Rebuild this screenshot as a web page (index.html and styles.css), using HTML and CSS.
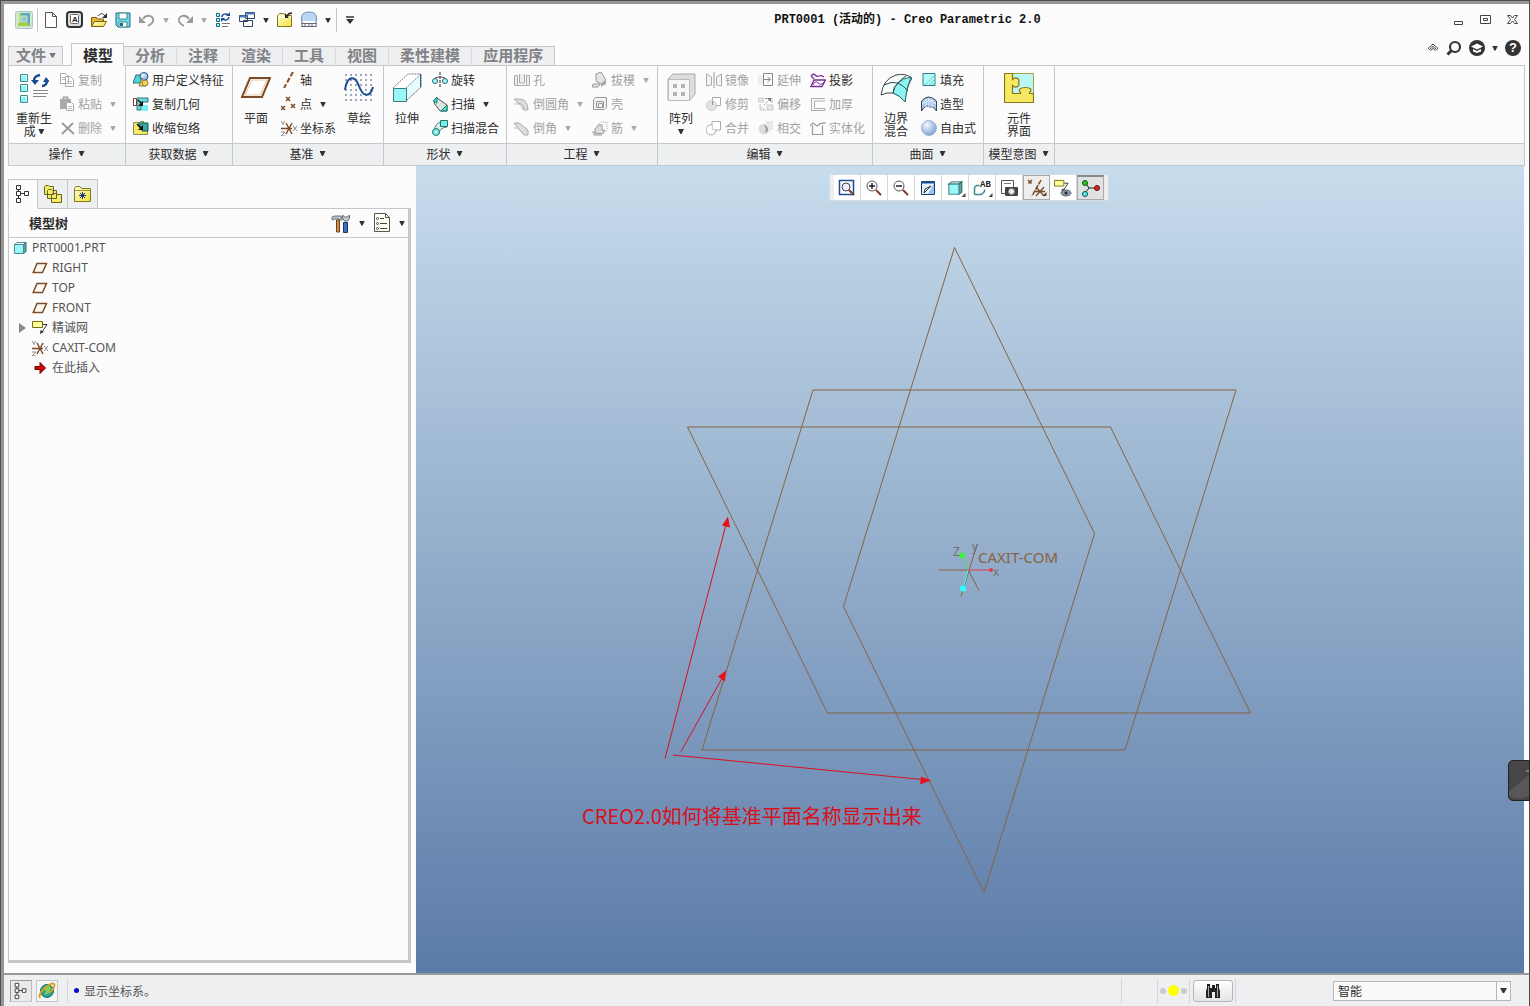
FILE: index.html
```html
<!DOCTYPE html>
<html lang="zh-CN">
<head>
<meta charset="utf-8">
<title>PRT0001 (活动的) - Creo Parametric 2.0</title>
<link rel="stylesheet" href="styles.css">
</head>
<body>
<svg class="defs" aria-hidden="true">
  <defs>
    <linearGradient id="yellow" x2="1" y2="1"><stop offset="0" stop-color="#fffde0"/><stop offset="1" stop-color="#f2e032"/></linearGradient>
    <linearGradient id="cyan" x2="1" y2="1"><stop offset="0" stop-color="#e8ffff"/><stop offset="1" stop-color="#5fe3e3"/></linearGradient>
    <radialGradient id="ball" cx=".35" cy=".3" r=".7"><stop offset="0" stop-color="#f4f9ff"/><stop offset="1" stop-color="#7fa6d3"/></radialGradient>
    <linearGradient id="leaf"><stop offset="0" stop-color="#eaf6c0"/><stop offset="1" stop-color="#4cb85c"/></linearGradient>
    <symbol id="i-cube" viewBox="0 0 16 16"><path d="M2.500 4.500 5 2.500h9l-2.500 2z" fill="#f0ffff" stroke="#5c8c90"/><path d="m11.500 4.500 2.500-2v9l-2.500 2z" fill="#5aa3a6" stroke="#2c6c70"/><path d="M2.500 4.500h9v9h-9z" fill="#9af7f7" stroke="#4c8c90"/></symbol>
    <symbol id="i-plane" viewBox="0 0 16 12"><path d="M5 1.500h9.500L10.500 10.500H1.200z" fill="#fffaf2" stroke="#7d4c26" stroke-width="1.500"/></symbol>
    <symbol id="i-csys" viewBox="0 0 16 16"><path d="M0 8.500h11M5 3l6 11M11 3 5 14" stroke="#7d4c26" stroke-width="1.500" fill="none"/><path d="m0 1 2 2.500L4 1M2 3v2M0 12h4l-4 4h4M12 6l4 5m0-5-4 5" stroke="#888" fill="none"/></symbol>
    <symbol id="i-tree" viewBox="0 0 16 20"><path d="M3.500 5v9M5 9.500h4" stroke="#333" fill="none"/><path d="M1.500 1.500h4v4h-4zM1.500 7.500h4v4h-4zM1.500 14.500h4v4h-4zM9.500 7.500h4v4h-4z" fill="#fff" stroke="#333"/></symbol>
    <symbol id="i-note" viewBox="0 0 16 16"><path d="M.5 1.500h10v6H.5z" fill="#ffffa0" stroke="#77700a"/><path d="M11 4.500h4L10 12" stroke="#333" fill="none"/><path d="m8 14 .5-4 3.500 2z" fill="#333"/></symbol>
    <symbol id="i-folder" viewBox="0 0 18 18"><path d="M1.500 15.500v-11l2-2h4l2 2h6v11z" fill="url(#yellow)" stroke="#7b7a20"/><path d="M2 6.500h13" stroke="#fff"/></symbol>
  </defs>
</svg>
<div class="window">
<header class="titlebar">
  <div class="quick">
    <button class="qb" aria-label="Creo"><svg width="18" height="18"><rect x=".5" y=".5" width="17" height="17" rx="2" fill="#d2e6d0" stroke="#a9c3cf"/><path d="M3 2h12v13H3z" fill="#5aa7bf"/><path d="M3 2h4v13H3z" fill="url(#leaf)"/><path d="M3 12h11v3H3z" fill="#a4cf3f"/><path d="M6 5h6v6H6z" fill="#8cc8e0" stroke="#d8eaa0"/></svg></button>
    <i class="sep"></i>
    <button class="qb" aria-label="新建"><svg width="16" height="18"><path d="M2.500 1.500h7l4 4v11h-11zM9.500 1.500v4h4" fill="#fff" stroke="#555"/></svg></button>
    <button class="qb" aria-label="重命名"><svg width="18" height="18"><rect x="1" y="1" width="15" height="15" rx="3" fill="#ddd" stroke="#333" stroke-width="2"/><rect x="4.500" y="3.500" width="8" height="9" rx="1" fill="#fff" stroke="#666"/><text class="key" x="6" y="11">A</text></svg></button>
    <button class="qb" aria-label="打开"><svg width="18" height="18"><path d="M1.500 15.500v-9h5l1 1.500h6v3" fill="#e9b93a" stroke="#806010"/><path d="m1.500 15.500 3-5h12l-3 5z" fill="url(#yellow)" stroke="#806010"/><path d="M8 5c2-3 5-3 7 0" fill="none" stroke="#333"/><path d="M17 2v5h-5z" fill="#333"/></svg></button>
    <button class="qb" aria-label="保存"><svg width="18" height="18"><path d="M2 2h14v14H4l-2-2z" fill="#6fd9e3" stroke="#1d6f82"/><path d="M5 2h8v6H5zM5 11h8v5H5z" fill="#fff" stroke="#3b8b99"/><path d="M6 12h3v3H6z" fill="#1d6f82"/></svg></button>
    <button class="qb" aria-label="撤消"><svg width="18" height="18"><path d="M5 8c3-5 11-4 10 2 0 2-2 3-5 5" fill="none" stroke="#999" stroke-width="1.800"/><path d="M1 5v7h7z" fill="#999"/></svg></button>
    <button class="drop off" aria-label="撤消列表"><i class="caret"></i></button>
    <button class="qb" aria-label="重做"><svg width="18" height="18"><path d="M13 8C10 3 2 4 3 10c0 2 2 3 5 5" fill="none" stroke="#999" stroke-width="1.800"/><path d="M17 5v7h-7z" fill="#999"/></svg></button>
    <button class="drop off" aria-label="重做列表"><i class="caret"></i></button>
    <button class="qb" aria-label="重新生成"><svg width="18" height="18"><path d="M2.500 2.500h3v3h-3zM2.500 7.500h3v3h-3zM2.500 12.500h3v3h-3z" fill="#9ff" stroke="#267"/><path d="M8 12.500h8M8 15.500h6" stroke="#777"/><path d="M8 6c0-3 4-4 6-2m1 2c0 3-4 4-6 2" fill="none" stroke="#1b4c94" stroke-width="1.500"/><path d="M12 5h4V1zM11 7H7v4z" fill="#1b4c94"/></svg></button>
    <button class="qb" aria-label="窗口"><svg width="18" height="18"><path d="M7.500 1.500h9v6h-9zM1.500 4.500h8v6h-8zM5.500 9.500h9v6h-9z" fill="#fff" stroke="#346"/><path d="M7.500 2.500h9M1.500 5.500h8" stroke="#4a78b8" stroke-width="2"/></svg></button>
    <button class="drop" aria-label="窗口列表"><i class="caret"></i></button>
    <button class="qb" aria-label="关闭"><svg width="18" height="18"><use href="#i-folder"/><path d="M16 2c-3 0-4 1-5 3" fill="none" stroke="#222" stroke-width="1.500"/><path d="M9 2v5h4z" fill="#222"/></svg></button>
    <button class="qb" aria-label="测量"><svg width="18" height="18"><path d="M1.500 10V7q0-6 7.500-6t7.500 6v3" fill="#bcd5f3" stroke="#6d8fb8"/><path d="M1.500 12.500h15M1.500 15.500h15M2 10v6M16 10v6M5 13v3M9 13v3M12 13v3" stroke="#667"/></svg></button>
    <button class="drop" aria-label="测量列表"><i class="caret"></i></button>
    <i class="sep"></i>
    <button class="qb" aria-label="自定义"><svg width="8" height="8"><path d="M0 1h8" stroke="#333" stroke-width="1.500"/><path d="M0 3h8L4 8z" fill="#333"/></svg></button>
  </div>
  <h1>PRT0001 (活动的) - Creo Parametric 2.0</h1>
  <div class="winctl">
    <button aria-label="最小化"><svg width="12" height="12"><path d="M1.500 7.500h8v3h-8z" fill="#fff" stroke="#444"/></svg></button>
    <button aria-label="还原"><svg width="12" height="12"><path d="M.5 1.500h10v8H.5zM3.500 4.500h4v2h-4z" fill="#fff" stroke="#444"/></svg></button>
    <button aria-label="关闭"><svg width="12" height="12"><path d="M.5 1.500h3L5.500 4l2-2.500h3L7.500 5.500l3 4h-3l-2-2.500-2 2.500h-3l3-4z" fill="#fff" stroke="#444"/></svg></button>
  </div>
</header>

<div class="tabbar">
  <nav class="tabs">
    <button class="tab file">文件<i class="caret"></i></button>
    <button class="tab active">模型</button>
    <button class="tab">分析</button><button class="tab">注释</button><button class="tab">渲染</button><button class="tab">工具</button><button class="tab">视图</button><button class="tab">柔性建模</button><button class="tab">应用程序</button>
  </nav>
  <div class="help">
    <button aria-label="折叠功能区"><svg width="12" height="10"><path d="M1 5.500 6 1l5 4.500-1.500 1L6 3.500l-3.500 3zM3.500 7.500 6 5.500l2.500 2" fill="#fff" stroke="#444"/></svg></button>
    <button aria-label="搜索"><svg width="16" height="16"><circle cx="9" cy="7" r="5" fill="none" stroke="#333" stroke-width="2.200"/><path d="m5.500 10.500-4 4" stroke="#333" stroke-width="3"/></svg></button>
    <button aria-label="学习"><svg width="16" height="16"><circle cx="8" cy="8" r="8" fill="#333"/><path d="m2 6.500 6-3 6 3-6 3zM4 9v2.500l4 1.500 4-1.500V9L8 11z" fill="#fff"/></svg></button>
    <button aria-label="学习列表"><i class="caret"></i></button>
    <button class="qmark" aria-label="帮助">?</button>
  </div>
</div>

<section class="ribbon">
  <div class="group g1"><div class="body indent">
    <button class="big"><svg width="30" height="30"><path d="M1.500 1.500h7v7h-7zM1.500 11.500h7v7h-7zM1.500 22.500h7v7h-7z" fill="#e4ffff" stroke="#3c8c90"/><path d="M2 3h5v5H2zM2 13h5v5H2zM2 24h5v5H2z" fill="#8ff5f5"/><path d="M14 17.500h15M14 20.500h15M14 23.500h13" stroke="#888"/><path d="M15 8c0-4 2-5 6-6M28 7c0 4-2 6-5 6" fill="none" stroke="#1b4c94" stroke-width="2.500"/><path d="M12 7h8l-4 5zM24 9h7l-4-5z" fill="#1b4c94"/></svg><span>重新生<br>成 <i class="caret"></i></span></button>
    <div class="col">
      <button class="cmd" disabled><svg width="16" height="16"><path d="M1.500 1.500h5l3 3v7h-8zM6.500 4.500h5l3 3v7h-8z" fill="#fff" stroke="#aaa"/><path d="M8 9.500h5M8 11.500h5M3 5.500h3M3 7.500h3" stroke="#bbb"/></svg>复制</button>
      <button class="cmd" disabled><svg width="16" height="16"><path d="M1 3h11v10H1z" fill="#aaa"/><path d="M4 1h5v3H4z" fill="#ccc" stroke="#999"/><path d="M7.500 6.500h5l2 2v6h-7z" fill="#fff" stroke="#aaa"/><path d="M9 10.500h4M9 12.500h4" stroke="#bbb"/></svg>粘贴<i class="caret"></i></button>
      <button class="cmd" disabled><svg width="16" height="16"><path d="m3 3 12 11M14 3 3 14" stroke="#999" stroke-width="1.800"/></svg>删除<i class="caret"></i></button>
    </div></div><button class="glabel">操作<i class="caret"></i></button></div>

  <div class="group g2"><div class="body pad">
    <div class="col">
      <button class="cmd"><svg width="16" height="16"><path d="M3 3h7l-3 8H0z" fill="#4fd5dd" stroke="#276"/><circle cx="11" cy="4.500" r="4" fill="url(#ball)" stroke="#258"/><path d="m9 6 4 8H6z" fill="#f5df50" stroke="#875"/><circle cx="12" cy="11" r="3" fill="#f0d850" stroke="#875"/></svg>用户定义特征</button>
      <button class="cmd"><svg width="16" height="16"><path d="M4 2h11v4H8v8H4z" fill="#6fdcdc" stroke="#277"/><path d="M.5 2.500h3v7h-3z" fill="#fff" stroke="#833"/><path d="M9 9h6v6H9z" fill="#7aeff5"/><path d="m5 4 4 4" stroke="#111" stroke-width="1.500"/><path d="M5 10h5V5z" fill="#111"/></svg>复制几何</button>
      <button class="cmd"><svg width="16" height="16"><path d="M.5 14.500v-12h6l1-1h3v9h4v4z" fill="#f7ea5e" stroke="#886"/><path d="M6 3h9v8H9V7H6z" fill="#38a9a0" stroke="#155"/><path d="m4 4 5 5" stroke="#111" stroke-width="1.500"/><path d="M5 10h5V5z" fill="#111"/></svg>收缩包络</button>
    </div></div><button class="glabel">获取数据<i class="caret"></i></button></div>

  <div class="group g3"><div class="body">
    <button class="big"><svg width="30" height="30"><path d="M9 5h20l-8 19H1z" fill="#fff" stroke="#7d4c26" stroke-width="2"/><path d="M11 7h15l-7 15H4z" fill="#fff" stroke="#e6c8a4"/></svg><span>平面</span></button>
    <div class="col">
      <button class="cmd"><svg width="16" height="16"><path d="M12 0 3 16" stroke="#8d4f22" stroke-width="2" stroke-dasharray="5 2"/></svg>轴</button>
      <button class="cmd"><svg width="16" height="16"><path d="m5 1 4 4m0-4L5 5M0 10l4 4m0-4-4 4m10-6 4 4m0-4-4 4" stroke="#7d4c26" stroke-width="1.500"/></svg>点<i class="caret"></i></button>
      <button class="cmd"><svg width="16" height="16"><use href="#i-csys"/></svg>坐标系</button>
    </div>
    <button class="big"><svg width="30" height="30"><path d="M1 2h29M1 7h29M1 12h29M1 17h29M1 22h29M1 27h29" stroke="#9aa8bc" stroke-width="2" stroke-dasharray="2 3"/><path d="M1 17C3 2 11 2 15 13s11 12 14 1" fill="none" stroke="#1b4c94" stroke-width="2"/></svg><span>草绘</span></button>
    </div><button class="glabel">基准<i class="caret"></i></button></div>

  <div class="group g4"><div class="body">
    <button class="big"><svg width="30" height="30"><path d="M1 15 16 1h13v13L14 28" fill="#fff" stroke="#777" stroke-dasharray="2 1"/><path d="M14 15 29 1v13L14 28z" fill="#e6fbfb" stroke="#888" stroke-dasharray="2 1"/><path d="M28.500 1v13" stroke="#1d6f82"/><path d="M1.500 15.500h13v13h-13z" fill="#9af7f7" stroke="#3c7c80"/></svg><span>拉伸</span></button>
    <div class="col">
      <button class="cmd"><svg width="16" height="16"><path d="M8 0v16" stroke="#222" stroke-dasharray="3 1"/><circle cx="3" cy="9" r="2.500" fill="#9ff" stroke="#366"/><circle cx="13" cy="9" r="2.500" fill="#9ff" stroke="#366"/><path d="M3 6q5-3 10 0" fill="none" stroke="#555"/></svg>旋转</button>
      <button class="cmd"><svg width="16" height="16"><path d="m5 2 10 7v6H8L2 7z" fill="#d9e6e2" stroke="#555"/><path d="m1 5 4-4v6zM9 15l6-6v6z" fill="#3fe0e0" stroke="#276"/></svg>扫描<i class="caret"></i></button>
      <button class="cmd"><svg width="16" height="16"><path d="M2 11q1-8 7-9l6 5q-8 1-8 7z" fill="#d5eeee" stroke="#677"/><path d="M8.500.5h7v6h-7z" fill="#7ee" stroke="#276"/><circle cx="4" cy="12" r="3.500" fill="#7ee" stroke="#276"/><circle cx="4" cy="12" r="1" fill="#fff"/></svg>扫描混合</button>
    </div></div><button class="glabel">形状<i class="caret"></i></button></div>

  <div class="group g5"><div class="body pad spaced">
    <div class="col">
      <button class="cmd" disabled><svg width="16" height="16"><path d="M.5 3.500h3v10h-3zM12.500 3.500h3v10h-3zM5.500 2v9h5V2M3.500 13.500h9" fill="#eee" stroke="#aaa"/></svg>孔</button>
      <button class="cmd" disabled><svg width="16" height="16"><path d="M0 3h6q8 1 8 11h-4q0-6-6-7z" fill="#ddd" stroke="#aaa"/><path d="M0 8h5q3 1 4 6" fill="none" stroke="#bbb"/></svg>倒圆角<i class="caret"></i></button>
      <button class="cmd" disabled><svg width="16" height="16"><path d="M0 3h5l9 7v5h-4L4 8z" fill="#ddd" stroke="#aaa"/><path d="M0 8h4l5 6" fill="none" stroke="#bbb"/></svg>倒角<i class="caret"></i></button>
    </div>
    <div class="col">
      <button class="cmd" disabled><svg width="16" height="16"><path d="M4 2 9 0l5 8-5 4-5-3zM1 12h7l-2 3H0z" fill="#e4e4e4" stroke="#999"/><path d="m9 12 5-4v4l-5 3z" fill="#aaa"/></svg>拔模<i class="caret"></i></button>
      <button class="cmd" disabled><svg width="16" height="16"><path d="M1.500 3.500 3.500 1.500h11v10l-2 2h-11zM4.500 5.500h7v6h-7zM6.500 7.500h4v4h-4z" fill="#f3f3f3" stroke="#999"/></svg>壳</button>
      <button class="cmd" disabled><svg width="16" height="16"><path d="M4.500 6 9 2h6v8l-4 4" fill="none" stroke="#aaa" stroke-dasharray="1 1"/><path d="M3 13V9l4-4h3v5h3l-3 4zM0 12h2v3h8" fill="#ddd" stroke="#999"/></svg>筋<i class="caret"></i></button>
    </div></div><button class="glabel">工程<i class="caret"></i></button></div>

  <div class="group g6"><div class="body">
    <button class="big"><svg width="30" height="30"><path d="m2 6 5-5h22v20l-5 6H2z" fill="#ddd" stroke="#aaa"/><path d="M2.500 6.500h21v21h-21z" fill="#f7f7f7" stroke="#bbb"/><path d="M7 11h4v4H7zM15 11h4v4h-4zM7 19h4v4H7zM15 19h4v4h-4z" fill="#b4b4b4"/></svg><span>阵列<br><i class="caret"></i></span></button>
    <div class="spaced">
    <div class="col">
      <button class="cmd" disabled><svg width="16" height="16"><path d="M.5 2 5.500 5v8l-5 1zM15.500 2l-5 3v8l5 1z" fill="#f3f3f3" stroke="#aaa"/><path d="M8 0v16" stroke="#999"/></svg>镜像</button>
      <button class="cmd" disabled><svg width="16" height="16"><path d="M6.500 1.500h8v8h-8z" fill="#fff" stroke="#aaa"/><circle cx="5.500" cy="9.500" r="5" fill="#e2e2e2" stroke="#ccc"/><path d="M6.500 9V5" stroke="#999"/></svg>修剪</button>
      <button class="cmd" disabled><svg width="16" height="16"><path d="M6 1.500h8.500V10H10a5 5 0 1 1-4-5z" fill="#fff" stroke="#aaa"/><path d="M6.500 5v4.500H10" fill="none" stroke="#ccc"/></svg>合并</button>
    </div>
    <div class="col">
      <button class="cmd" disabled><svg width="16" height="16"><path d="M0 3h6v10H0z" fill="#eee"/><path d="M5.500 1.500h9v12h-9zM6 7.500h6M9.500 5l3 2.500-3 2.500" fill="none" stroke="#888"/></svg>延伸</button>
      <button class="cmd" disabled><svg width="16" height="16"><path d="M.5 2h5v4h-5zM9 9h6v5H9zM2 8v6h6" fill="#e6e6e6" stroke="#ccc"/><path d="m6 9 5-5M7 2.500h7v5" fill="none" stroke="#999" stroke-dasharray="2 1"/><path d="M13 2v4L9 2z" fill="#777"/></svg>偏移</button>
      <button class="cmd" disabled><svg width="16" height="16"><circle cx="6" cy="9" r="5.500" fill="#ddd"/><path d="M8 1h7v9H8z" fill="#e9e9e9"/><path d="M6 5q4 0 4 6l-3 2q2-4-1-8z" fill="#999"/></svg>相交</button>
    </div>
    <div class="col">
      <button class="cmd"><svg width="16" height="16"><path d="M1 4q2-3 4-1t4 1 5 1M1 4l3 3" fill="none" stroke="#7a2a9a" stroke-width="1.300"/><path d="m4 8-3 6.500h11L15.500 8z" fill="#fff" stroke="#7a2a9a" stroke-width="1.300"/><path d="M3 13q2-5 5-2t6-1" fill="none" stroke="#7a2a9a"/></svg>投影</button>
      <button class="cmd" disabled><svg width="16" height="16"><path d="M15 2.500H1.500v12H15v-2M15 5H4.500v7.500H15" fill="none" stroke="#aaa"/></svg>加厚</button>
      <button class="cmd" disabled><svg width="16" height="16"><path d="M2.500 5.500v9h10v-9M0 6l3-3 4 3q4-4 9-3" fill="none" stroke="#999" stroke-width="1.200"/></svg>实体化</button>
    </div></div></div><button class="glabel">编辑<i class="caret"></i></button></div>

  <div class="group g7"><div class="body">
    <button class="big"><svg width="32" height="30"><path d="M1 22Q3 6 16 2q10-2 16 3-6 10-7 24-5-7-12-9-6-1-12 2z" fill="#f4fdfd" stroke="#444"/><path d="M18 10q5-5 13-6-5 11-6 25-5-7-12-9 1-6 5-10z" fill="#8af5f2" stroke="#277"/><path d="M4 12q7-4 14-2 6 3 10 8M13 20q0-6 5-10 3-4 8-7" fill="none" stroke="#444"/></svg><span>边界<br>混合</span></button>
    <div class="col">
      <button class="cmd"><svg width="16" height="16"><path d="M2 1.500h12v12H2z" fill="#b4fbf8" stroke="#267f86"/><path d="m8 13 6-6M11 13l3-3M4 13 14 3" stroke="#5bd4d0"/></svg>填充</button>
      <button class="cmd"><svg width="16" height="16"><path d="M.5 15V5q7-8 15 0v10q-3-5-6-4-3-1-4-1-3 1-5 5z" fill="#a8c6ea" stroke="#345"/><path d="M5 3v8M8 2v9M11 3v9M1 8q7-7 14 0" fill="none" stroke="#e8f0fa"/></svg>造型</button>
      <button class="cmd"><svg width="16" height="16"><circle cx="8" cy="8" r="7.500" fill="url(#ball)" stroke="#9fb4cc"/></svg>自由式</button>
    </div></div><button class="glabel">曲面<i class="caret"></i></button></div>

  <div class="group g8"><div class="body middle">
    <button class="big"><svg width="30" height="30"><path d="M.5.500h29v29H.5z" fill="#b9f6f6" stroke="#aaa040"/><path d="M.5.500h8v6c3-3 8-1 6 3 2 4-3 6-6 3v8h8v-1c-3-3 0-5 5-5s7 2 4 5v1h4v9H.5z" fill="#f7ea62" stroke="#85741a" stroke-width="1.200"/></svg><span>元件<br>界面</span></button>
    </div><button class="glabel">模型意图<i class="caret"></i></button></div>
  <div class="group rest"><div class="body"></div><div class="glabel"></div></div>
</section>

<main class="work">
  <aside class="side">
    <div class="sidetabs">
      <button class="stab on" aria-label="模型树"><svg width="16" height="20"><use href="#i-tree"/></svg></button>
      <button class="stab" aria-label="文件夹浏览器"><svg width="20" height="20"><path d="M1.500 10.500v-8l1-1h3l1 1h4v8zM4.500 14.500v-8l1-1h3l1 1h4v8zM8.500 18.500v-8l1-1h3l1 1h5v8z" fill="#f3ea6e" stroke="#66651a"/></svg></button>
      <button class="stab" aria-label="收藏夹"><svg width="20" height="18"><path d="M1.500 16.500v-13l1.500-2h4l1.500 2h9v13z" fill="url(#yellow)" stroke="#7b7a20"/><path d="M2 5.500h15" stroke="#99983a"/><path d="M6 10.500h7M9.500 7v7M7 8l5 5M12 8l-5 5" stroke="#123a7a"/></svg></button>
    </div>
    <div class="panel">
      <div class="phead">
        <h2>模型树</h2>
        <button aria-label="设置"><svg width="20" height="20"><path d="M1 7V4l3-1h6l1 4H8V6H4z" fill="#b8c4c8" stroke="#678"/><path d="M5.500 7h3v12h-3z" fill="#e08a2c" stroke="#643"/><path d="M12.500 9.500h4v10h-4z" fill="#2f73d0" stroke="#235"/><path d="M11.500 2v3l2 3h3l2-3V2l-2 2h-3z" fill="#c8ced2" stroke="#667"/></svg></button><i class="caret"></i>
        <button aria-label="显示"><svg width="18" height="20"><path d="M1.500.500h11l4 4v14h-15zM12.500.500v4h4" fill="#fffff0" stroke="#555"/><path d="M7 5.500h4M7 10.500h7M7 15.500h7" stroke="#444"/><circle cx="4.500" cy="5.500" r="1" fill="#fff" stroke="#444"/><circle cx="4.500" cy="10.500" r="1" fill="#fff" stroke="#444"/><circle cx="4.500" cy="15.500" r="1" fill="#fff" stroke="#444"/></svg></button><i class="caret"></i>
      </div>
      <ul class="tree">
        <li class="root"><svg width="16" height="16"><use href="#i-cube"/></svg>PRT0001.PRT</li>
        <li><svg width="16" height="12"><use href="#i-plane"/></svg>RIGHT</li>
        <li><svg width="16" height="12"><use href="#i-plane"/></svg>TOP</li>
        <li><svg width="16" height="12"><use href="#i-plane"/></svg>FRONT</li>
        <li class="parent"><i class="twist"></i><svg width="16" height="16"><use href="#i-note"/></svg>精诚网</li>
        <li><svg width="16" height="16"><use href="#i-csys"/></svg>CAXIT-COM</li>
        <li><svg width="16" height="16"><path d="M3 6.500h5v-4l5.500 5.500L8 13.500v-4H3z" fill="#d00" stroke="#600"/></svg>在此插入</li>
      </ul>
    </div>
  </aside>
  <section class="canvas">
    <svg class="scene" viewBox="416 166 1108 806">
      <g fill="none" stroke="#876341">
        <path d="M954.500 247 1094.500 533 984 892 843.500 606z"/>
        <path d="M813 389.500h423L1125 749.500H702z"/>
        <path d="M687.500 426.500h423L1250.500 712.500h-423z"/>
        <path d="M939 569.500h29M977 544l-16 52M968 569l11 21"/>
      </g>
      <path d="M968 569.500h23" stroke="#e0384c"/><path d="m968 569-6-14" stroke="#4be04b"/><path d="m968 570-5 18" stroke="#3ff" />
      <circle cx="991" cy="569.500" r="2" fill="#e0384c"/><circle cx="962" cy="555" r="3" fill="#3df03d"/><circle cx="963" cy="588" r="3" fill="#3ff"/>
      <text class="axis" x="953" y="555">Z</text><text class="axis" x="972" y="550">y</text><text class="axis" x="993" y="575">x</text>
      <text class="csname" x="978" y="562">CAXIT-COM</text>
      <path d="m665 758 61-234M681 751l42-75M673 754.500 922 779" fill="none" stroke="#d8101c"/>
      <path d="m728 516 2 11-8-2zM726 670l-1 11-7-5zM931 780l-11 4 1-8z" fill="#e8101c"/>
      <text class="caption" x="582" y="823">CREO2.0如何将基准平面名称显示出来</text>
    </svg>
    <div class="viewbar">
      <button aria-label="重新调整"><svg width="18" height="18"><path d="M1.500 1.500h14v14h-14z" fill="#fff" stroke="#1b4c94" stroke-width="1.500"/><circle cx="8" cy="8" r="4" fill="#eef" stroke="#444"/><path d="m11 11 5 5" stroke="#7d3c26" stroke-width="2"/></svg></button>
      <button aria-label="放大"><svg width="18" height="18"><circle cx="7" cy="7" r="5" fill="#fff" stroke="#555"/><path d="M4 7h6M7 4v6" stroke="#222" stroke-width="1.500"/><path d="m11 11 5 5" stroke="#7d3c26" stroke-width="2"/></svg></button>
      <button aria-label="缩小"><svg width="18" height="18"><circle cx="7" cy="7" r="5" fill="#fff" stroke="#555"/><path d="M4 7h6" stroke="#222" stroke-width="1.500"/><path d="m11 11 5 5" stroke="#7d3c26" stroke-width="2"/></svg></button>
      <button aria-label="重画"><svg width="18" height="18"><path d="M2.500 2.500h13v13h-13z" fill="#e4f0fc" stroke="#1b3c74"/><path d="M2 3.500h14" stroke="#1b4c94" stroke-width="2"/><path d="M15 4v11H9z" fill="#9cc4f0"/><path d="m12 7-5 5-2 2 1-4z" fill="#fff" stroke="#333"/></svg></button>
      <button aria-label="显示样式" class="more"><svg width="18" height="18"><use href="#i-cube"/></svg></button>
      <button aria-label="已命名视图" class="more"><svg width="18" height="18"><path d="M1.500 15.500v-7l2-2h3M1.500 15.500h7l3-3v-2" fill="none" stroke="#3c8c90" stroke-width="1.500"/><text x="7" y="8" class="ab">AB</text></svg></button>
      <button aria-label="视图管理器"><svg width="18" height="18"><path d="M1.500 1.500h12v13h-12z" fill="#fff" stroke="#555"/><path d="M4 4.500h7" stroke="#777"/><rect x="5" y="8" width="13" height="9" rx="1" fill="#444"/><circle cx="11.500" cy="12.500" r="3" fill="#eee" stroke="#888"/></svg></button>
      <button aria-label="基准显示" class="more sel"><svg width="18" height="18"><path d="m1 1 4 4m0-4L1 5M14 1 5 17" stroke="#7d4c26" stroke-width="1.500" stroke-dasharray="5 1"/><path d="m9 8 8 9M17 8l-8 9M8 12.500h10" stroke="#7d4c26" stroke-width="1.300"/></svg></button>
      <button aria-label="注释显示"><svg width="18" height="18"><use href="#i-note" width="15" height="15"/><ellipse cx="12" cy="14" rx="5" ry="3" fill="#89a" stroke="#567"/><circle cx="12" cy="14" r="1.500" fill="#223"/></svg></button>
      <button aria-label="旋转中心" class="sel pressed"><svg width="20" height="18"><path d="M5 3l4 6h8M9 9l-5 6" fill="none" stroke="#222"/><circle cx="5" cy="4" r="2.500" fill="#2c2" stroke="#151"/><circle cx="17" cy="9" r="2.500" fill="#d22" stroke="#511"/><circle cx="5" cy="15" r="2.500" fill="#5ee" stroke="#155"/></svg></button>
    </div>
  </section>
  <button class="dock" aria-label="展开"><svg width="22" height="41"><path d="M1 32 22 14v22q-12 4-21 0z" fill="#6a6a6c" opacity=".5"/><path d="M18 11h4" stroke="#bbb"/></svg></button>
</main>

<footer class="status">
  <button class="sbtn down" aria-label="模型树显示"><svg width="16" height="18"><use href="#i-tree"/></svg></button>
  <button class="sbtn" aria-label="浏览器显示"><svg width="18" height="18"><circle cx="9" cy="9" r="6.500" fill="#2a9f9a" stroke="#176"/><path d="M6 5q5-3 7 1l-3 6-4 1q3-4 0-8z" fill="#7dd35a"/><path d="M2 16q-2-4 5-10t9-4q2 3-5 9" fill="none" stroke="#d9a520" stroke-width="2"/></svg></button>
  <i class="sep"></i>
  <span class="dot"></span><p>显示坐标系。</p>
  <i class="sep wide"></i><i class="sep"></i>
  <span class="lights"><i></i><i class="lit"></i><i></i></span>
  <i class="sep"></i>
  <button class="find" aria-label="查找"><svg width="18" height="18"><path d="M3 2h3v4h2V3h3v3h1V2h3v4l1 3v7h-5v-6H8v6H2V9l1-3z" fill="#222"/><path d="M4.500 4v11M13.500 4v11" stroke="#aaa"/></svg></button>
  <i class="sep"></i>
  <label class="filter" aria-label="选择过滤器"><select><option>智能</option></select><i class="caret"></i></label>
</footer>
</div>
</body>
</html>
```
FILE: styles.css
```css
* { box-sizing: border-box; }
body { margin: 0; font: 12px/16px "Noto Sans CJK SC", sans-serif; color: #2d2d2d; background: #fcfcfc; }
button { margin: 0; padding: 0; border: 0; background: none; font: inherit; color: inherit; display: flex; align-items: center; justify-content: center; }
svg { display: block; flex: none; }
.defs { width: 0; height: 0; position: absolute; }

.window { display: flex; flex-direction: column; border: solid #999697; border-width: 3px 0 0 3px; outline: 1px solid #504e4f; margin: 1px 1px 0 1px; min-height: calc(100vh - 1px); }

.caret { display: inline-block; flex: none; width: 7px; height: 5px; background: #333; clip-path: polygon(0 0, 100% 0, 60% 100%, 40% 100%); }
.sep { flex: none; width: 1px; height: 24px; margin: 0 1px; background: #c8c8cc; }

/* title bar */
.titlebar { display: flex; align-items: center; height: 32px; padding: 0 10px 0 8px; }
.quick { display: flex; align-items: center; }
.qb { width: 24px; height: 24px; }
.drop { width: 14px; height: 24px; }
.drop .caret, .help .caret { width: 6px; }
.drop.off .caret { background: #aaa; }
.titlebar h1 { flex: 1; margin: 0; text-align: center; font: bold 12px/16px "Liberation Mono", "Noto Sans CJK SC", monospace; color: #111; }
.winctl { display: flex; justify-content: flex-end; gap: 15px; }
.key { font: bold 8px "Liberation Sans", sans-serif; fill: #222; }

/* tabs */
.tabbar { display: flex; justify-content: space-between; height: 30px; padding: 0 8px 0 4px; margin-bottom: -1px; position: relative; }
.tabs { display: flex; align-items: flex-end; }
.tab { height: 20px; padding: 0 11px 2px 11px; font: bold 15px/16px "Noto Sans CJK SC", sans-serif; color: #808285; background: #eeeff1; border: 1px solid #c5c8cb; border-left-width: 0; border-right-color: #d8dadd; }
.tab:last-child { border-right-color: #c5c8cb; }
.tab.file { margin-right: 8px; padding: 0 6px 2px 7px; border-left-width: 1px; border-right-color: #c5c8cb; }
.tab.file .caret { margin-left: 3px; background: #75777a; }
.tab.active { height: 23px; padding: 0 10px 0 11px; border-left-width: 1px; border-right-color: #c5c8cb; border-bottom-color: #fcfcfc; background: #fcfcfc; color: #2d2d2d; }
.help { display: flex; align-items: center; gap: 7px; padding-bottom: 6px; }
.help .qmark { width: 16px; height: 16px; border-radius: 50%; background: #333; color: #fff; font: bold 13px/16px "Liberation Sans", sans-serif; }

/* ribbon */
.ribbon { display: flex; margin: 0 4px; border: 1px solid #c5c8cb; border-bottom: 0; height: 101px; }
.group { flex: none; display: flex; flex-direction: column; border-right: 1px solid #c5c8cb; }
.g1 { width: 117px; } .g2 { width: 107px; } .g3 { width: 151px; } .g4 { width: 123px; }
.g5 { width: 151px; } .g6 { width: 215px; } .g7 { width: 111px; } .g8 { width: 71px; }
.rest { flex: 1; border-right: 0; }
.body { flex: 1; display: flex; }
.indent { padding-left: 2px; }
.pad { padding-left: 5px; }
.spaced { display: flex; gap: 7px; }
.middle { justify-content: center; }
.glabel { height: 23px; width: 100%; gap: 6px; padding: 0 1px 2px 0; background: #eeeff1; border: solid #c5c8cb; border-width: 1px 0; }
.glabel .caret, .cmd .caret, .big .caret { width: 6px; }
.big { width: 46px; flex: none; flex-direction: column; justify-content: flex-start; padding-top: 7px; gap: 8px; line-height: 13px; white-space: nowrap; }
.big span .caret { vertical-align: 2px; }
.col { flex: none; padding-top: 2px; }
.cmd { height: 24px; justify-content: flex-start; padding-left: 2px; gap: 3px; white-space: nowrap; }
.cmd .caret { margin-left: 5px; }
.cmd:disabled { color: #a2a2a2; }
.cmd:disabled .caret { background: #aaa; }

/* work area */
.work { flex: 1; display: flex; padding-right: 5px; position: relative; }
.side { flex: none; width: 412px; padding: 13px 5px 10px 4px; display: flex; flex-direction: column; }
.sidetabs { display: flex; }
.stab { width: 30px; height: 30px; background: #eeeff1; border: 1px solid #c5c8cb; border-left-width: 0; }
.stab.on { position: relative; background: #fcfcfc; border-left-width: 1px; border-bottom-color: #fcfcfc; }
.panel { flex: 1; margin-top: -1px; border: 1px solid #c5c8cb; border-right-width: 3px; border-bottom-width: 3px; }
.phead { display: flex; align-items: center; height: 29px; gap: 8px; padding: 0 3px 0 20px; border-bottom: 1px solid #c5c8cb; }
.phead h2 { flex: 1; margin: 0; font: bold 13px/16px "Noto Sans CJK SC", sans-serif; }
.phead .caret { width: 6px; }
.tree { list-style: none; margin: 0; padding: 0; color: #555; font: 12px/20px "Noto Sans", "Noto Sans CJK SC", sans-serif; }
.tree li { display: flex; align-items: center; height: 20px; gap: 4px; padding-left: 23px; }
.tree li.root { padding-left: 3px; }
.tree li.parent { padding-left: 9px; }
.twist { width: 10px; height: 10px; background: #888; clip-path: polygon(10% 0, 80% 50%, 10% 100%); }

.canvas { flex: 1; display: flex; justify-content: center; align-items: flex-start; padding: 8px 3px 0 0; position: relative; background: linear-gradient(#c7dcec, #5b7ba8); }
.scene { position: absolute; inset: 0; width: 100%; height: 100%; }
.csname { font: 15px "Noto Sans", sans-serif; fill: #876341; }
.axis { font: 12px "Noto Sans", sans-serif; fill: #77706c; }
.caption { font: 20px "Noto Sans CJK SC", sans-serif; fill: #d8101c; }
.ab { font: bold 9px "Liberation Mono", monospace; fill: #222; }
.viewbar { position: relative; display: flex; padding: 0 4px; background: #eceef0; border: 1px solid #d5dce2; }
.viewbar button { width: 27px; height: 25px; background: #fff; border-right: 1px solid #d5d8dc; position: relative; }
.viewbar .more::after { content: ""; position: absolute; right: 2px; bottom: 3px; width: 4px; height: 4px; background: #444; clip-path: polygon(100% 0, 100% 100%, 0 100%); }
.viewbar .sel { background: #eee; border: 1px solid #aaa; }
.viewbar .pressed { background: #e0e1e3; border-top: 2px solid #888; }
.dock { position: absolute; right: -1px; top: 594px; height: 41px; width: 22px; background: #464648; border: 1px solid #222; border-radius: 5px 0 0 5px; overflow: hidden; }

/* status bar */
.status { display: flex; align-items: center; height: 33px; padding: 0 18px 0 6px; background: #eeeff1; border-top: 2px solid #999a9e; }
.status .sep { margin: 0; background: #d4d5d8; }
.status .sep.wide { margin-right: 35px; }
.sbtn { width: 22px; height: 22px; margin-right: 4px; border: 1px solid #c4c6ca; background: #f6f6f6; }
.sbtn.down { border-color: #999 #bbb #ccc #999; background: #e9eaec; }
.sbtn + .sep { margin-left: 5px; }
.dot { width: 5px; height: 5px; margin: 0 5px 0 6px; border-radius: 50%; background: #0a0ac8; }
.status p { flex: 1; margin: 0; color: #555; }
.lights { display: flex; align-items: center; gap: 2px; padding: 0 2px; }
.lights i { width: 6px; height: 6px; border-radius: 50%; background: #c8cacd; }
.lights .lit { width: 11px; height: 11px; background: #ff0; }
.find { width: 40px; height: 22px; margin: 0 2px 0 3px; border: 1px solid #b5b7ba; border-radius: 3px; background: linear-gradient(#fff, #e4e4e6); }
.filter { display: grid; align-items: center; width: 178px; margin-left: 97px; }
.filter select { grid-area: 1 / 1; appearance: none; width: 100%; height: 20px; margin: 0; padding: 0 4px; border: 1px solid #b5b7ba; border-radius: 0; background: linear-gradient(#b5b7ba, #b5b7ba) right 13px top / 1px 100% no-repeat #fafafa; font: inherit; color: inherit; }
.filter .caret { grid-area: 1 / 1; justify-self: end; margin-right: 4px; pointer-events: none; }
```
